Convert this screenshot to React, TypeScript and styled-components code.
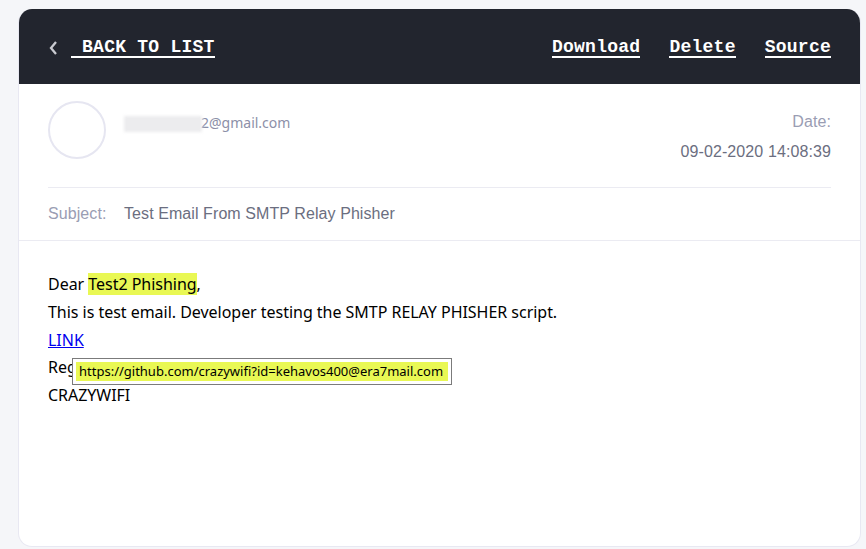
import React from "react";
import styled, { createGlobalStyle } from "styled-components";

const Global = createGlobalStyle`
  html, body { margin: 0; padding: 0; background: #f5f6f9; }
  #root { height: 549px; }
`;
const Page = styled.div`
  box-sizing: border-box;
  height: 549px;
  padding: 9px 5px 2px 19px;
  overflow: hidden;
`;
const Card = styled.div`
  box-sizing: border-box;
  height: 538px;
  background: #fff;
  border: 1px solid #e8e8f2;
  border-top: none;
  border-radius: 14px;
  overflow: hidden;
  display: flex;
  flex-direction: column;
  margin-left: -1px;
`;
const Header = styled.header`
  height: 75px;
  flex: none;
  background: #22252e;
  display: flex;
  align-items: center;
  justify-content: space-between;
  padding: 0 29px 0 29px;
  font-family: "Liberation Mono", monospace;
  font-size: 18px;
  letter-spacing: 0.25px;
  font-weight: 700;
  color: #fff;
`;
const Back = styled.div`
  display: flex;
  align-items: center;
`;
const Chevron = styled.svg`
  width: 10px;
  height: 16px;
  margin-right: 13px;
  margin-top: 2px;
`;
const HeaderLink = styled.a`
  color: #fff;
  padding-top: 2px;
  line-height: 18px;
  border-bottom: 2px solid #fff;
  white-space: pre;
`;
const Actions = styled.nav`
  display: flex;
  gap: 29px;
`;
const Meta = styled.section`
  margin: 0 29px;
  height: 104px;
  flex: none;
  box-sizing: border-box;
  border-bottom: 1px solid #ebebf2;
  display: flex;
  padding-top: 17px;
`;
const Avatar = styled.div`
  box-sizing: border-box;
  width: 58px;
  height: 58px;
  border: 2px solid #e6e6f1;
  border-radius: 50%;
  flex: none;
`;
const Sender = styled.div`
  position: relative;
  margin-left: 18px;
  margin-top: 14px;
  width: 170px;
  height: 20px;
  font-family: "Noto Sans", sans-serif;
  font-size: 14px;
  line-height: 16px;
  color: #8d90a8;
  padding-left: 77px;
  box-sizing: border-box;
`;
const Redaction = styled.span`
  position: absolute;
  left: 0;
  top: 1px;
  width: 78px;
  height: 16px;
  background: #ececee;
  filter: blur(1.5px);
`;
const DateBlock = styled.div`
  margin-left: auto;
  text-align: right;
  font-family: "Liberation Sans", sans-serif;
  font-size: 16px;
  letter-spacing: 0.1px;
`;
const DateLabel = styled.div`
  color: #9a9db3;
  line-height: 20px;
  margin-top: 11px;
`;
const DateValue = styled.div`
  color: #6b6e80;
  line-height: 20px;
  margin-top: 10px;
`;
const Subject = styled.section`
  height: 53px;
  flex: none;
  box-sizing: border-box;
  border-bottom: 1px solid #ebebf2;
  padding: 0 29px;
  display: flex;
  align-items: center;
  font-family: "Liberation Sans", sans-serif;
  font-size: 16px;
  letter-spacing: 0.08px;
`;
const SubjectLabel = styled.span`
  color: #9a9db3;
  width: 76px;
`;
const SubjectText = styled.span`
  color: #6b6e80;
`;
const Body = styled.div`
  position: relative;
  padding: 29.4px 29px;
  font-family: "Noto Sans", sans-serif;
  font-size: 16px;
  letter-spacing: -0.03px;
  line-height: 28px;
  color: #000;
`;
const Line = styled.div`
  height: 27.7px;
`;
const Mark = styled.span`
  background: #e9f854;
`;
const BodyLink = styled.a`
  color: #0000ee;
  text-decoration: underline;
`;
const Tooltip = styled.div`
  position: absolute;
  left: 53px;
  top: 117px;
  box-sizing: border-box;
  width: 380px;
  height: 27px;
  border: 1px solid #7b7b7b;
  padding: 3px;
  background: #fff;
  display: flex;
`;
const TooltipText = styled.span`
  flex: 1;
  background: #e9f854;
  font-size: 13px;
  letter-spacing: 0;
  line-height: 19px;
  padding-left: 3px;
  white-space: nowrap;
`;

export default function App() {
  return (
    <Page>
      <Global />
      <Card>
        <Header>
          <Back>
            <Chevron viewBox="0 0 10 16" fill="none">
              <path d="M8 2 L3 8 L8 14" stroke="#c9cad0" strokeWidth="2.3" />
            </Chevron>
            <HeaderLink>{" BACK TO LIST"}</HeaderLink>
          </Back>
          <Actions>
            <HeaderLink>Download</HeaderLink>
            <HeaderLink>Delete</HeaderLink>
            <HeaderLink>Source</HeaderLink>
          </Actions>
        </Header>
        <Meta>
          <Avatar />
          <Sender>
            <Redaction />
            2@gmail.com
          </Sender>
          <DateBlock>
            <DateLabel>Date:</DateLabel>
            <DateValue>09-02-2020 14:08:39</DateValue>
          </DateBlock>
        </Meta>
        <Subject>
          <SubjectLabel>Subject:</SubjectLabel>
          <SubjectText>Test Email From SMTP Relay Phisher</SubjectText>
        </Subject>
        <Body>
          <Line>Dear <Mark>Test2 Phishing</Mark>,</Line>
          <Line>This is test email. Developer testing the SMTP RELAY PHISHER script.</Line>
          <Line><BodyLink>LINK</BodyLink></Line>
          <Line>Regards</Line>
          <Line>CRAZYWIFI</Line>
          <Tooltip>
            <TooltipText>https://github.com/crazywifi?id=kehavos400@era7mail.com</TooltipText>
          </Tooltip>
        </Body>
      </Card>
    </Page>
  );
}
